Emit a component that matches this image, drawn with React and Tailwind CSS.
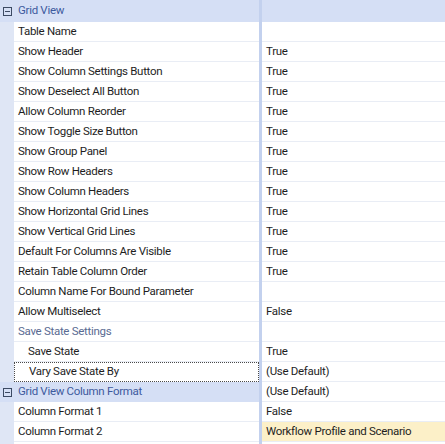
import React from "react";

const rows = [
  { type: "cat", label: "Grid View" },
  { label: "Table Name", value: "" },
  { label: "Show Header", value: "True" },
  { label: "Show Column Settings Button", value: "True" },
  { label: "Show Deselect All Button", value: "True" },
  { label: "Allow Column Reorder", value: "True" },
  { label: "Show Toggle Size Button", value: "True" },
  { label: "Show Group Panel", value: "True" },
  { label: "Show Row Headers", value: "True" },
  { label: "Show Column Headers", value: "True" },
  { label: "Show Horizontal Grid Lines", value: "True" },
  { label: "Show Vertical Grid Lines", value: "True" },
  { label: "Default For Columns Are Visible", value: "True" },
  { label: "Retain Table Column Order", value: "True" },
  { label: "Column Name For Bound Parameter", value: "" },
  { label: "Allow Multiselect", value: "False" },
  { type: "sub", label: "Save State Settings" },
  { label: "Save State", value: "True", indent: true },
  { label: "Vary Save State By", value: "(Use Default)", indent: true, focused: true },
  { type: "cat", label: "Grid View Column Format", value: "(Use Default)" },
  { label: "Column Format 1", value: "False" },
  { label: "Column Format 2", value: "Workflow Profile and Scenario", highlight: true },
];

function CollapseBox() {
  return (
    <svg width="9" height="9" viewBox="0 0 9 9" className="block">
      <rect x="0.5" y="0.5" width="8" height="8" fill="none" stroke="#3c4a63" />
      <line x1="2" y1="4.5" x2="7" y2="4.5" stroke="#3c4a63" />
    </svg>
  );
}

function Row({ row, first }) {
  const h = first ? "h-[22px]" : "h-[20px]";
  if (row.type === "cat") {
    return (
      <div className={`flex ${h} bg-[#d5dff5]`}>
        <div className="w-[14px] flex items-center justify-center">
          <CollapseBox />
        </div>
        <div className="w-[245px] flex items-center pl-[4px] text-[#3d5a9e]">{row.label}</div>
        <div className="w-[3px] bg-[#c3d1ee]" />
        <div
          className={`flex-1 flex items-center pl-[4px] ${
            row.value ? "bg-white border-b border-[#e9edf5]" : ""
          }`}
        >
          {row.value}
        </div>
      </div>
    );
  }
  return (
    <div className={`flex ${h}`}>
      <div className="w-[14px] bg-[#dfe6f5]" />
      <div
        className={`w-[245px] flex items-center ${row.indent ? "pl-[14px]" : "pl-[4px]"} ${
          row.focused
            ? "border border-dotted border-[#4a4a4a]"
            : "border-b border-[#e9edf5]"
        } ${row.type === "sub" ? "text-[#5a6b92]" : ""}`}
      >
        {row.label}
      </div>
      <div className="w-[3px] bg-[#c3d1ee]" />
      <div
        className={`flex-1 flex items-center pl-[4px] border-b border-[#e9edf5] ${
          row.highlight ? "bg-[#fcf0c8]" : ""
        }`}
      >
        {row.value}
      </div>
    </div>
  );
}

export default function App() {
  return (
    <div
      className="w-[445px] h-[444px] overflow-hidden bg-white text-[11.5px] tracking-[-0.3px] text-[#1e1e1e]"
      style={{ fontFamily: "Roboto, 'Liberation Sans', sans-serif" }}
    >
      {rows.map((row, i) => (
        <Row key={i} row={row} first={i === 0} />
      ))}
      <div className="flex h-[3px]">
        <div className="w-[14px] bg-[#dfe6f5]" />
        <div className="w-[245px]" />
        <div className="w-[3px] bg-[#c3d1ee]" />
      </div>
    </div>
  );
}
